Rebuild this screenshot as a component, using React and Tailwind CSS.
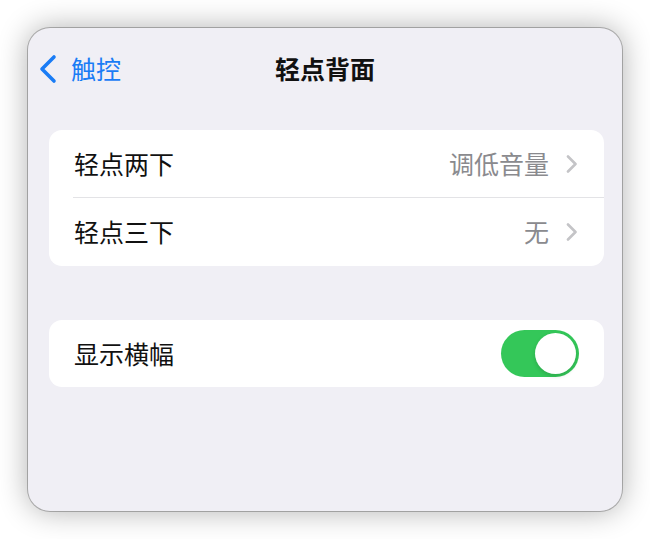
import React from 'react';

const font = { fontFamily: '"Noto Sans CJK SC", "Noto Sans", sans-serif' };

const Chevron = () => (
    <svg width="12" height="18" viewBox="0 0 12 18" fill="none">
        <path d="M2 1.5 L9.5 9 L2 16.5" stroke="#c4c4c7" strokeWidth="2.6" strokeLinecap="round" strokeLinejoin="round" />
    </svg>
);

const Row = ({ label, value, divider }) => (
    <div className="flex h-[68px] items-center pl-[25px] relative">
        <div className="flex-1 flex items-center h-full pr-[26px]">
            <span className="text-[25px] text-[#111] flex-1">{label}</span>
            <span className="text-[25px] text-[#8a8a8e]">{value}</span>
            <span className="ml-[17px] flex items-center">
                <Chevron />
            </span>
        </div>
        {divider && <div className="absolute left-[24px] right-0 bottom-0 h-px bg-[#e3e3e6]" />}
    </div>
);

export default function App() {
    return (
        <div className="w-[650px] h-[539px] bg-white pt-[28px] pl-[28px]" style={font}>
            <div className="w-[594px] h-[483px] rounded-[22px] bg-[#f0eff5] shadow-[0_0_30px_rgba(0,0,0,0.32)] ring-1 ring-black/25 overflow-hidden">
                {/* Nav */}
                <div className="mt-[22px] h-[38px] flex items-center relative">
                    <div className="flex items-center pl-[10px] text-[#1a7cf5]">
                        <svg width="20" height="30" viewBox="0 0 20 30" fill="none">
                            <path d="M16 3 L4 15 L16 27" stroke="#1a7cf5" strokeWidth="3.6" strokeLinecap="round" strokeLinejoin="round" />
                        </svg>
                        <span className="ml-[13px] text-[25px]">触控</span>
                    </div>
                    <div className="absolute inset-0 flex items-center justify-center pointer-events-none">
                        <span className="text-[25px] font-bold text-[#111]">轻点背面</span>
                    </div>
                </div>

                {/* Group 1 */}
                <div className="mt-[42px] ml-[21px] mr-[18px] bg-white rounded-[13px]">
                    <Row label="轻点两下" value="调低音量" divider />
                    <Row label="轻点三下" value="无" />
                </div>

                {/* Group 2 */}
                <div className="mt-[54px] ml-[21px] mr-[18px] bg-white rounded-[13px] h-[67px] flex items-center pl-[25px] pr-[25px]">
                    <span className="text-[25px] text-[#111] flex-1">显示横幅</span>
                    <div className="w-[78px] h-[47px] rounded-full bg-[#34c759] p-[3px] flex justify-end">
                        <div className="w-[41px] h-[41px] rounded-full bg-white shadow-[0_2px_4px_rgba(0,0,0,0.15)]" />
                    </div>
                </div>
            </div>
        </div>
    );
}
